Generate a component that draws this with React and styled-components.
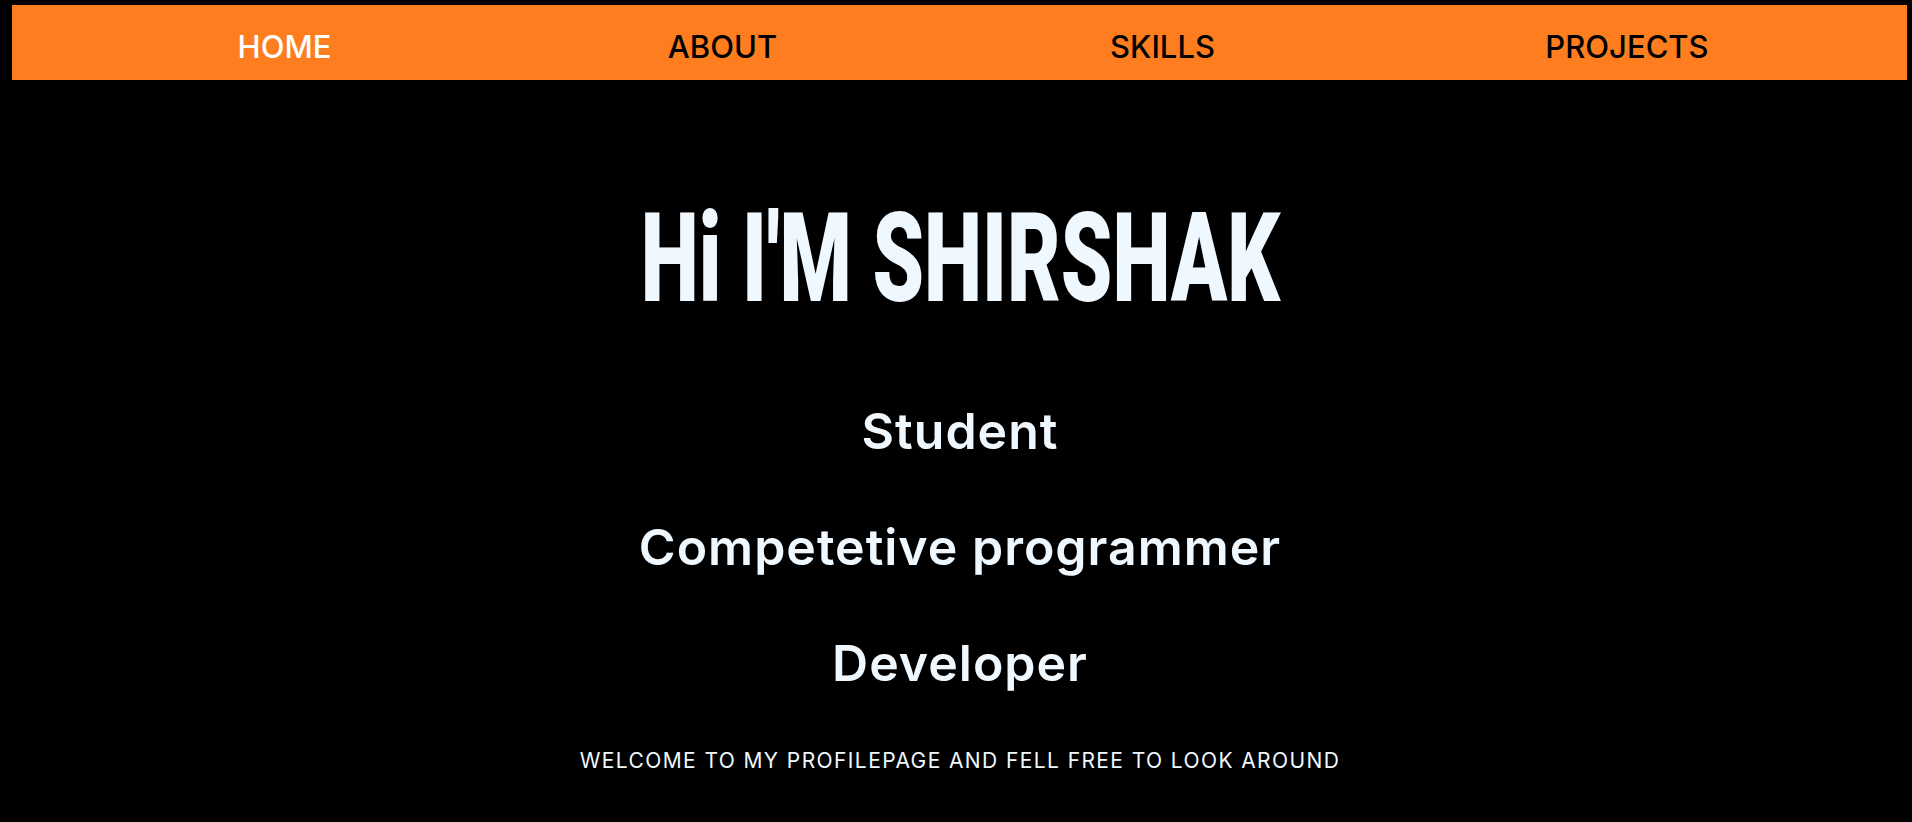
import React from "react"
import styled, { createGlobalStyle } from "styled-components"

const GlobalStyle = createGlobalStyle`
  html, body {
    margin: 0;
    padding: 0;
    background-color: #000;
  }
  body {
    min-height: 822px;
    font-family: "Inter", "Lato", sans-serif;
  }
`

const Page = styled.div`
  background-color: #000;
  min-height: 822px;
  padding-top: 5px;
  box-sizing: border-box;
`

const NavBar = styled.nav`
  height: 75px;
  box-sizing: border-box;
  margin: 0 5px 0 12px;
  padding: 7px 0 0 54px;
  background-color: #fe7d1f;
  display: grid;
  grid-template-columns: 437px 439px 441px 488px;
  align-items: center;
`

const NavLink = styled.a`
  text-align: center;
  font-family: "Inter", "Lato", sans-serif;
  font-size: 31px;
  font-weight: 500;
  line-height: 1;
  text-decoration: none;
  cursor: pointer;
  color: ${props => (props.$active ? "#ffffff" : "#000000")};
`

const Hero = styled.main`
  display: flex;
  flex-direction: column;
  align-items: center;
  padding: 116px 0 0 8px;
`

const Title = styled.h1`
  margin: 0;
  font-family: "Roboto", "Liberation Sans", sans-serif;
  font-size: 125px;
  font-weight: 900;
  line-height: 1;
  color: #f0f8ff;
  white-space: nowrap;
  transform: scaleX(0.66);
  transform-origin: center;
`

const Roles = styled.div`
  display: flex;
  flex-direction: column;
  align-items: center;
  gap: 66px;
  margin-top: 85px;
`

const Role = styled.h2`
  margin: 0;
  font-family: "Inter", "Lato", sans-serif;
  font-size: 50px;
  font-weight: 600;
  letter-spacing: 1px;
  line-height: 1;
  color: #f0f8ff;
`

const Welcome = styled.p`
  margin: 62px 0 0;
  font-family: "Inter", "Lato", sans-serif;
  font-size: 21px;
  font-weight: 400;
  letter-spacing: 1.4px;
  line-height: 1;
  color: #f0f8ff;
`

const links = ["HOME", "ABOUT", "SKILLS", "PROJECTS"]
const roles = ["Student", "Competetive programmer", "Developer"]

const App = () => {
  return (
    <Page>
      <GlobalStyle />
      <NavBar>
        {links.map((l, i) => (
          <NavLink key={l} $active={i === 0}>
            {l}
          </NavLink>
        ))}
      </NavBar>
      <Hero>
        <Title>Hi I'M SHIRSHAK</Title>
        <Roles>
          {roles.map(r => (
            <Role key={r}>{r}</Role>
          ))}
        </Roles>
        <Welcome>WELCOME TO MY PROFILEPAGE AND FELL FREE TO LOOK AROUND</Welcome>
      </Hero>
    </Page>
  )
}

export default App
